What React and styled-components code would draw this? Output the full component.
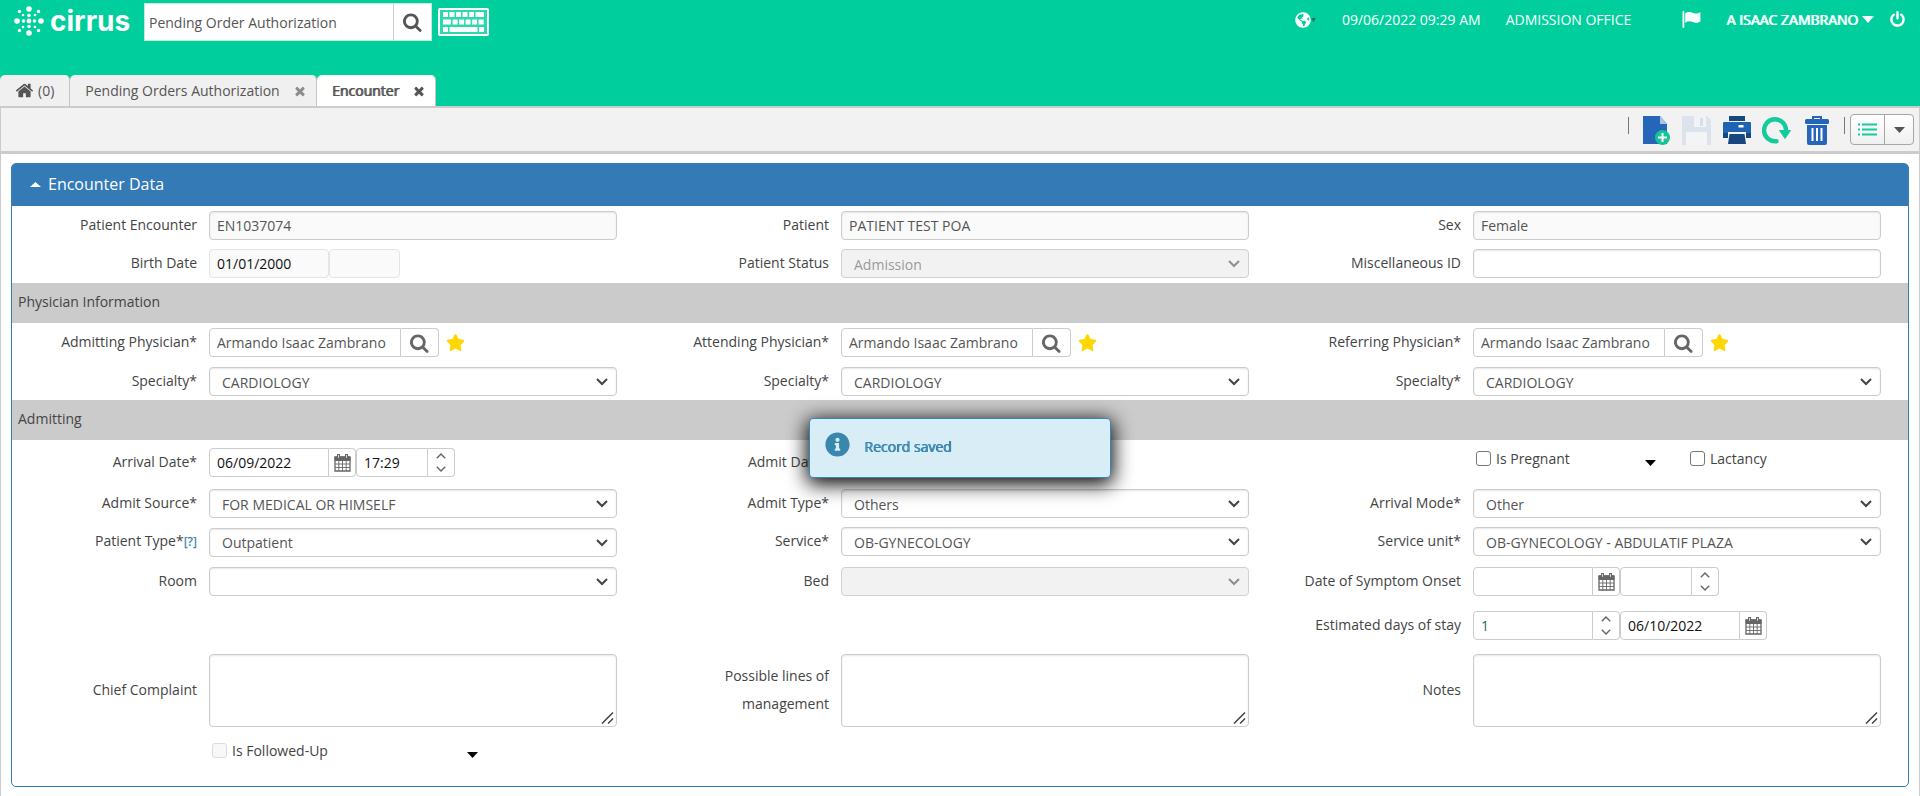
import React, { useState } from 'react'
import styled, { createGlobalStyle } from 'styled-components'
import { FaStar, FaInfoCircle, FaGlobeAmericas } from 'react-icons/fa'

const palette = {
  Green: '#00cf9d',
  Blue: '#337ab7',
  Text: '#444444',
  Input: '#555555',
  Border: '#cccccc',
  Band: '#cbcbcb',
  Info: '#3a87ad'
}

const GlobalStyle = createGlobalStyle`
  * {
    box-sizing: border-box;
  }

  body {
    margin: 0;
    background-color: #ffffff;
    color: ${palette.Text};
    font-family: 'Open Sans', 'Noto Sans', sans-serif;
    font-size: 14px;
    line-height: 20px;
  }

  button,
  input,
  select,
  textarea {
    margin: 0;
    color: inherit;
    font: inherit;
  }

  button {
    padding: 0;
    border: none;
    background: none;
    cursor: pointer;
  }

  svg {
    display: block;
    flex: none;
  }
`

const Page = styled.div`
  min-height: 100vh;
  display: flex;
  flex-direction: column;
`

/* ---------- header ---------- */

const Header = styled.header`
  display: flex;
  flex-direction: column;
  justify-content: space-between;
  height: 106px;
  background-color: ${palette.Green};
`

const TopBar = styled.div`
  display: flex;
  justify-content: space-between;
  padding: 3px 14px 0 14px;
`

const TopGroup = styled.div`
  display: flex;
  align-items: center;
  height: ${props => props.$height}px;
`

const Brand = styled.a`
  display: flex;
  align-items: center;
  gap: 6px;
  width: 130px;
  padding-bottom: 2px;
  color: #ffffff;
  text-decoration: none;
`

const BrandName = styled.span`
  font-family: Inter, sans-serif;
  font-size: 28px;
  font-weight: 700;
  line-height: 30px;
`

const SearchBox = styled.div`
  display: flex;
  width: 288px;
  height: 38px;
  margin-right: 6px;
  border: 1px solid #c5e8dd;
  background-color: #ffffff;
`

const SearchInput = styled.input`
  flex: 1;
  min-width: 0;
  padding: 1px 4px 0;
  border: none;
  border-right: 1px solid ${palette.Border};
  outline: none;
  background: none;
  color: ${palette.Input};
`

const SearchButton = styled.button`
  display: flex;
  align-items: center;
  justify-content: center;
  width: 37px;
  color: ${palette.Input};
`

const TopText = styled.span`
  margin-right: 25px;
  color: #ffffff;
`

const FlagButton = styled.button`
  margin: 0 25px 0 26px;
  color: #ffffff;
`

const LangButton = styled.button`
  display: flex;
  align-items: center;
  margin-right: 26px;
  color: #ffffff;
`

const UserButton = styled.button`
  display: flex;
  align-items: center;
  gap: 4px;
  margin-right: 15px;
  color: #ffffff;
  text-shadow: 1px 0 0 #ffffff;
`

const PowerButton = styled.button`
  color: #ffffff;
`

const Tabs = styled.nav`
  display: flex;
  align-items: flex-end;
`

const Tab = styled.div`
  display: flex;
  align-items: center;
  height: 31px;
  padding: 0 9px 0 15px;
  border-right: 1px solid #c6c6c6;
  border-radius: 5px 5px 0 0;
  background-color: ${props => (props.$active ? '#ffffff' : '#f0f0f0')};
  color: ${palette.Input};
  text-shadow: ${props => (props.$active ? '1px 0 0 #555555' : 'none')};
`

const TabButton = styled.button`
  display: flex;
  align-items: center;
  gap: 4px;
  padding-right: ${props => (props.$home ? 6 : 13)}px;
  text-shadow: inherit;
`

const TabClose = styled.button`
  color: ${props => (props.$active ? '#555555' : '#8c8c8c')};
`

/* ---------- toolbar ---------- */

const Toolbar = styled.div`
  display: flex;
  align-items: center;
  justify-content: flex-end;
  height: 48px;
  padding-right: 5px;
  border: 1px solid ${palette.Border};
  border-width: 2px 1px 3px;
  background-color: #f2f2f2;
`

const Divider = styled.span`
  align-self: flex-start;
  width: 1px;
  height: 17px;
  margin: 9px 5px 0 10px;
  background-color: #777777;
`

const Tools = styled.div`
  display: flex;
  gap: 11px;
  padding: 2px 3px 0 8px;
`

const ToolButton = styled.button`
  display: flex;
  justify-content: center;
  width: 29px;

  &:disabled {
    cursor: default;
  }
`

const ViewSwitch = styled.div`
  display: flex;
  height: 31px;
  border: 1px solid #a6a6a6;
  border-radius: 4px;
  background: linear-gradient(#ffffff, #f0f0f0);
`

const ViewButton = styled.button`
  display: flex;
  align-items: center;
  justify-content: center;
  width: ${props => (props.$wide ? 34 : 28)}px;
  border-right: ${props => (props.$wide ? '1px solid #a6a6a6' : 'none')};
`

/* ---------- panel ---------- */

const Main = styled.main`
  flex: 1;
  padding: 9px 10px 10px;
  border: 1px solid ${palette.Border};
  border-width: 0 1px;
`

const Panel = styled.section`
  border: 1px solid ${palette.Blue};
  border-radius: 5px;
`

const PanelHeader = styled.button`
  display: flex;
  align-items: center;
  gap: 7px;
  width: 100%;
  height: 42px;
  padding: 0 0 2px 18px;
  border-radius: 3px 3px 0 0;
  background-color: ${palette.Blue};
  color: #ffffff;
  font-size: 16px;
`

const SectionTitle = styled.h2`
  margin: 0;
  padding: 9px 6px 11px;
  background-color: ${palette.Band};
  font-size: 14px;
  font-weight: 400;
  line-height: 20px;
`

const Section = styled.div`
  padding: ${props => props.$padding};
`

const Row = styled.div`
  display: grid;
  grid-template-columns: repeat(3, minmax(0, 1fr));
  align-items: start;
  margin-top: ${props => props.$gap || 0}px;
`

const Cell = styled.div`
  display: grid;
  grid-template-columns: 185px minmax(0, 1fr);
  column-gap: 12px;
  align-items: center;
  padding-right: 27px;
`

const Label = styled.label`
  padding-bottom: 1px;
  line-height: 28px;
  text-align: right;
`

const Help = styled.a`
  color: ${palette.Info};
  font-size: 12px;
  font-weight: 600;
  text-decoration: none;
`

const Inline = styled.div`
  display: flex;
  align-items: center;
  height: ${props => props.$height || 29}px;
`

const Input = styled.input`
  width: 100%;
  height: 29px;
  padding: 0 7px;
  border: 1px solid ${palette.Border};
  border-radius: 4px;
  outline: none;
  background-color: ${props => (props.readOnly ? '#fafafa' : '#ffffff')};
  box-shadow: inset 0 1px 2px #e6e6e6;
  color: ${palette.Input};
`

const ShortInput = styled(Input)`
  width: ${props => props.$width}px;
  border-color: ${props => (props.readOnly ? '#e4e4e4' : palette.Border)};
  border-radius: ${props => (props.$joined ? '4px 0 0 4px' : '4px')};
  box-shadow: none;
  color: ${props => props.$color || '#111111'};
`

const AddOn = styled.button`
  display: flex;
  flex-direction: column;
  align-items: center;
  justify-content: center;
  gap: 7px;
  width: ${props => props.$width}px;
  height: 29px;
  margin-right: ${props => props.$after || 0}px;
  border: 1px solid ${palette.Border};
  border-left: none;
  border-radius: 0 4px 4px 0;
  background-color: #ffffff;
  color: #666666;
`

const FavButton = styled.button`
  color: #ffd700;
`

const SelectWrap = styled.div`
  position: relative;
  opacity: ${props => (props.$disabled ? 0.6 : 1)};
`

const Select = styled.select`
  display: block;
  width: 100%;
  height: 29px;
  padding: 2px 30px 0 12px;
  border: 1px solid ${palette.Border};
  border-radius: 4px;
  outline: none;
  appearance: none;
  background-color: #ffffff;
  box-shadow: inset 0 1px 2px #e6e6e6;
  color: ${palette.Input};

  &:disabled {
    background-color: #ebebeb;
    border-color: #b4b4b4;
    opacity: 1;
  }
`

const SelectArrow = styled.svg`
  position: absolute;
  top: 11px;
  right: 9px;
  pointer-events: none;
`

const AreaWrap = styled.div`
  position: relative;
  height: 73px;
`

const Area = styled.textarea`
  display: block;
  width: 100%;
  height: 73px;
  padding: 4px 7px;
  border: 1px solid ${palette.Border};
  border-radius: 4px;
  outline: none;
  resize: none;
  box-shadow: inset 0 1px 2px #e6e6e6;
`

const Grip = styled.svg`
  position: absolute;
  right: 3px;
  bottom: 3px;
  pointer-events: none;
`

const CheckLabel = styled.label`
  display: flex;
  align-items: center;
  gap: 5px;
  width: ${props => props.$width}px;
  padding-left: 3px;
`

const Check = styled.input`
  appearance: none;
  width: 15px;
  height: 15px;
  border: 1px solid ${props => (props.disabled ? '#dddddd' : '#767676')};
  border-radius: 3px;
  background-color: ${props => (props.disabled ? '#f8f8f8' : '#ffffff')};

  &:checked {
    background-color: ${palette.Blue};
  }
`

const CaretButton = styled.button`
  padding-top: 8px;
  width: ${props => props.$width}px;
`

const Toast = styled.div`
  position: fixed;
  top: 418px;
  left: 50%;
  display: flex;
  align-items: center;
  gap: 14px;
  width: 302px;
  height: 60px;
  margin-left: -151px;
  padding: 0 15px 8px;
  border: 1px solid ${palette.Info};
  border-radius: 4px;
  background-color: #d9edf7;
  box-shadow: 0 4px 20px 2px #000000;
  color: ${palette.Info};
`

const ToastText = styled.span`
  padding-top: 5px;
  text-shadow: 1px 0 0 ${palette.Info};
`

/* ---------- icons ---------- */

const Glyph = ({ size, d }) => (
  <svg width={size} height={size} viewBox='0 0 1792 1792' fill='currentColor'>
    <path d={d} />
  </svg>
)

const glyphs = {
  search:
    'M1152 832q0-185-131.5-316.5t-316.5-131.5-316.5 131.5-131.5 316.5 131.5 316.5 316.5 131.5 316.5-131.5 131.5-316.5zm512 832q0 52-38 90t-90 38q-54 0-90-38l-343-342q-179 124-399 124-143 0-273.5-55.5t-225-150-150-225-55.5-273.5 55.5-273.5 150-225 225-150 273.5-55.5 273.5 55.5 225 150 150 225 55.5 273.5q0 220-124 399l343 343q37 37 37 90z',
  home:
    'M1472 992v480q0 26-19 45t-45 19h-384v-384h-256v384h-384q-26 0-45-19t-19-45v-480q0-1 .5-3t.5-3l575-474 575 474q1 2 1 6zm223-69l-62 74q-8 9-21 11h-3q-13 0-21-7l-692-577-692 577q-12 8-24 7-13-2-21-11l-62-74q-8-10-7-23.5t11-21.5l719-599q32-26 76-26t76 26l244 204v-195q0-14 9-23t23-9h192q14 0 23 9t9 23v408l219 182q10 8 11 21.5t-7 23.5z',
  times:
    'M1490 1322q0 40-28 68l-136 136q-28 28-68 28t-68-28l-294-294-294 294q-28 28-68 28t-68-28l-136-136q-28-28-28-68t28-68l294-294-294-294q-28-28-28-68t28-68l136-136q28-28 68-28t68 28l294 294 294-294q28-28 68-28t68 28l136 136q28 28 28 68t-28 68l-294 294 294 294q28 28 28 68z',
  power:
    'M1664 896q0 156-61 298t-164 245-245 164-298 61-298-61-245-164-164-245-61-298q0-182 80.5-343t226.5-270q43-32 95.5-25t83.5 50q32 42 24.5 94.5t-49.5 84.5q-98 74-151.5 181t-53.5 228q0 104 40.5 198.5t109.5 163.5 163.5 109.5 198.5 40.5 198.5-40.5 163.5-109.5 109.5-163.5 40.5-198.5q0-121-53.5-228t-151.5-181q-42-32-49.5-84.5t24.5-94.5q31-43 84-50t95 25q146 109 226.5 270t80.5 343zm-640-768v640q0 52-38 90t-90 38-90-38-38-90v-640q0-52 38-90t90-38 90 38 38 90z'
}

const dots = [
  [15, 3, 2.8], [15, 27, 2.8], [3, 15, 2.8], [27, 15, 2.8],
  [15, 9.5, 1.8], [15, 20.5, 1.8], [9.5, 15, 1.8], [20.5, 15, 1.8],
  [15, 15, 2.4], [5.5, 5.5, 1.7], [24.5, 5.5, 1.7], [5.5, 24.5, 1.7],
  [24.5, 24.5, 1.7], [9, 9, 1.3], [21, 9, 1.3], [9, 21, 1.3], [21, 21, 1.3]
]

const LogoIcon = () => (
  <svg width='30' height='30' viewBox='0 0 30 30' fill='#ffffff'>
    {dots.map(([x, y, r]) => (
      <circle key={`${x}-${y}`} cx={x} cy={y} r={r} />
    ))}
  </svg>
)

const KeyboardIcon = () => (
  <svg width='51' height='28' viewBox='0 0 51 28' fill='#ffffff'>
    <rect x='1' y='1' width='49' height='26' rx='1' fill='#2dd8ae' stroke='#ffffff' strokeWidth='2' />
    {[0, 1, 2, 3, 4, 5].map(i => (
      <rect key={i} x={5 + i * 6.5} y='4' width={i === 5 ? 8.5 : 5} height='5' />
    ))}
    <rect x='5' y='11.5' width='8' height='5' />
    {[0, 1, 2, 3, 4].map(i => (
      <rect key={i} x={14.6 + i * 6.5} y='11.5' width='5' height='5' />
    ))}
    <rect x='5' y='19' width='5' height='5' />
    <rect x='11.5' y='19' width='28' height='5' />
    <rect x='41' y='19' width='5' height='5' />
  </svg>
)

const FlagIcon = () => (
  <svg width='19' height='17' viewBox='0 0 19 17' fill='#ffffff'>
    <rect x='0.5' y='0' width='1.8' height='17' rx='0.8' />
    <path d='M3.2 2.2C6 .6 8.3.6 11 1.9c2.6 1.2 4.5.8 7.4-.7v9.3c-2.8 1.6-5 1.9-7.5.6-2.6-1.3-4.9-1-7.700.6z' />
  </svg>
)

const Triangle = ({ width = 11, height = 6, up, color = '#000000' }) => (
  <svg width={width} height={height} viewBox='0 0 12 6' preserveAspectRatio='none' fill={color}>
    <path d={up ? 'M0 6L6 0l6 6z' : 'M0 0h12L6 6z'} />
  </svg>
)

const CalendarIcon = () => (
  <svg width='17' height='18' viewBox='0 0 17 18' fill='none' stroke='#666666'>
    <path d='M1 3h15v14H1z' strokeWidth='1.3' />
    <path d='M1 3h15v3.5H1z' fill='#666666' />
    <path d='M4.5.8v3.4M12.5.8v3.4' strokeWidth='3' strokeLinecap='round' />
    <path d='M4.5 1v2.8M12.5 1v2.8' stroke='#dddddd' strokeWidth='1' />
    <path d='M1 10h15M1 13.5h15M4.8 6v11M8.5 6v11M12.2 6v11' strokeWidth='0.9' />
  </svg>
)

const ChevronIcon = ({ up }) => (
  <svg width='10' height='6' viewBox='0 0 10 6' fill='none' stroke='#666666' strokeWidth='1.4'>
    <path d={up ? 'M.8 5.2L5 1l4.2 4.2' : 'M.8.8L5 5 9.2.8'} />
  </svg>
)

const NewIcon = () => (
  <svg width='29' height='29' viewBox='0 0 29 29'>
    <path d='M1 0h17l7 8v20H1z' fill='#2566ba' />
    <path d='M18 0l7 8h-7z' fill='#a9c4e6' />
    <circle cx='20.5' cy='21.5' r='7.5' fill='#16c595' />
    <path d='M20.5 17v9M16 21.5h9' stroke='#ffffff' strokeWidth='2' />
  </svg>
)

const SaveIcon = () => (
  <svg width='29' height='29' viewBox='0 0 29 29'>
    <path d='M0 0h25l4 4v25H0z' fill='#dde3ec' />
    <rect x='12' y='0' width='12' height='11' fill='#f1f3f6' />
    <rect x='18' y='2' width='3' height='8' fill='#d9dee6' />
    <rect x='4' y='16' width='21' height='13' fill='#f3f4f6' />
  </svg>
)

const PrintIcon = () => (
  <svg width='28' height='28' viewBox='0 0 28 28'>
    <path d='M6 0h16v5H6zM0 17h28v5H0z' fill='#17477f' />
    <rect x='0' y='6' width='28' height='13' rx='1' fill='#2063b3' />
    <path d='M0 17h28v4.5H0z' fill='#17477f' />
    <rect x='15.5' y='9' width='5' height='2.5' fill='#ffffff' />
    <path d='M5 16h18v13H5z' fill='#f2f2f2' />
    <path d='M6.5 18h15l1.5 10H5z' fill='#17477f' />
  </svg>
)

const RefreshIcon = () => (
  <svg width='29' height='29' viewBox='0 0 29 29' fill='none'>
    <path d='M14.5 25.2A11 11 0 1 1 24 15' stroke='#14cb9b' strokeWidth='4.4' strokeLinecap='round' />
    <path d='M17.5 14.5h11L23 22.5z' fill='#14cb9b' stroke='#14cb9b' strokeLinejoin='round' />
  </svg>
)

const TrashIcon = () => (
  <svg width='24' height='29' viewBox='0 0 24 29'>
    <path d='M8 3V1h8v2' fill='none' stroke='#2566ba' strokeWidth='2' />
    <rect x='0' y='3' width='24' height='5' rx='1.5' fill='#2566ba' />
    <path d='M2 9h20v18q0 2-2 2H4q-2 0-2-2z' fill='#2566ba' />
    <path d='M7.5 12v13M12 12v13M16.5 12v13' stroke='#ffffff' strokeWidth='2' />
  </svg>
)

const ListIcon = () => (
  <svg width='19' height='13' viewBox='0 0 19 13' stroke='#14cb9b' strokeWidth='2'>
    <path d='M0 1.5h2M0 6.5h2M0 11.5h2M4 1.5h15M4 6.5h15M4 11.5h15' />
  </svg>
)

/* ---------- fields ---------- */

const Field = ({ id, label, help, children }) => (
  <Cell>
    <Label htmlFor={id}>
      {label}
      {help && <Help href='#help'>[?]</Help>}
    </Label>
    {children}
  </Cell>
)

const TextField = ({ id, label, value = '', readOnly }) => (
  <Field id={id} label={label}>
    <Input id={id} defaultValue={value} readOnly={readOnly} />
  </Field>
)

const SelectField = ({ id, label, value = '', disabled, help }) => (
  <Field id={id} label={label} help={help}>
    <SelectWrap $disabled={disabled}>
      <Select id={id} disabled={disabled} defaultValue={value}>
        <option value={value}>{value}</option>
      </Select>
      <SelectArrow width='12' height='8' viewBox='0 0 12 8' fill='none' stroke='#444444' strokeWidth='2'>
        <path d='M1 1l5 5 5-5' />
      </SelectArrow>
    </SelectWrap>
  </Field>
)

const PhysicianField = ({ id, label }) => (
  <Field id={id} label={label}>
    <Inline>
      <ShortInput
        id={id}
        $width={192}
        $joined
        $color={palette.Input}
        defaultValue='Armando Isaac Zambrano'
      />
      <AddOn $width={38} $after={7} aria-label={`Search ${label}`}>
        <Glyph size={20} d={glyphs.search} />
      </AddOn>
      <FavButton aria-label='Favorite'>
        <FaStar size={19} />
      </FavButton>
    </Inline>
  </Field>
)

const AreaField = ({ id, label }) => (
  <Field id={id} label={label}>
    <AreaWrap>
      <Area id={id} />
      <Grip width='13' height='12' viewBox='0 0 13 12' stroke='#444444' strokeWidth='1.5'>
        <path d='M1 11.5L12 .5M7 11.5l5-5' />
      </Grip>
    </AreaWrap>
  </Field>
)

const Spinner = ({ label }) => (
  <AddOn $width={27} aria-label={label}>
    <ChevronIcon up />
    <ChevronIcon />
  </AddOn>
)

const DateAddOn = () => (
  <AddOn $width={27} aria-label='Pick a date'>
    <CalendarIcon />
  </AddOn>
)

const DateTimeField = ({ id, label, date, time }) => (
  <Field id={id} label={label}>
    <Inline>
      <ShortInput id={id} $width={120} $joined defaultValue={date} />
      <DateAddOn />
      <ShortInput $width={72} $joined defaultValue={time} aria-label={`${label} time`} />
      <Spinner label='Change time' />
    </Inline>
  </Field>
)

const App = () => {
  const [open, setOpen] = useState(true)

  return (
    <Page>
      <GlobalStyle />
      <Header>
        <TopBar>
          <TopGroup $height={38}>
            <Brand href='#home'>
              <LogoIcon />
              <BrandName>cirrus</BrandName>
            </Brand>
            <SearchBox>
              <SearchInput aria-label='Search' defaultValue='Pending Order Authorization' />
              <SearchButton aria-label='Search'>
                <Glyph size={20} d={glyphs.search} />
              </SearchButton>
            </SearchBox>
            <KeyboardIcon />
          </TopGroup>
          <TopGroup $height={33}>
            <LangButton aria-label='Language'>
              <FaGlobeAmericas size={16} />
              <Triangle width={5} height={4} color='#1f6f5c' />
            </LangButton>
            <TopText>09/06/2022 09:29 AM</TopText>
            <TopText>ADMISSION OFFICE</TopText>
            <FlagButton aria-label='Flag'>
              <FlagIcon />
            </FlagButton>
            <UserButton>
              A ISAAC ZAMBRANO
              <Triangle width={12} height={7} color='#ffffff' />
            </UserButton>
            <PowerButton aria-label='Log out'>
              <Glyph size={17} d={glyphs.power} />
            </PowerButton>
          </TopGroup>
        </TopBar>
        <Tabs>
          <Tab>
            <TabButton $home>
              <Glyph size={19} d={glyphs.home} />
              (0)
            </TabButton>
          </Tab>
          <Tab>
            <TabButton>Pending Orders Authorization</TabButton>
            <TabClose aria-label='Close Pending Orders Authorization'>
              <Glyph size={14} d={glyphs.times} />
            </TabClose>
          </Tab>
          <Tab $active>
            <TabButton>Encounter</TabButton>
            <TabClose $active aria-label='Close Encounter'>
              <Glyph size={14} d={glyphs.times} />
            </TabClose>
          </Tab>
        </Tabs>
      </Header>

      <Toolbar>
        <Divider />
        <Tools>
          <ToolButton aria-label='New'><NewIcon /></ToolButton>
          <ToolButton aria-label='Save' disabled><SaveIcon /></ToolButton>
          <ToolButton aria-label='Print'><PrintIcon /></ToolButton>
          <ToolButton aria-label='Refresh'><RefreshIcon /></ToolButton>
          <ToolButton aria-label='Delete'><TrashIcon /></ToolButton>
        </Tools>
        <Divider />
        <ViewSwitch>
          <ViewButton $wide aria-label='List view'><ListIcon /></ViewButton>
          <ViewButton aria-label='More views'><Triangle color='#555555' /></ViewButton>
        </ViewSwitch>
      </Toolbar>

      <Main>
        <Panel>
          <PanelHeader aria-expanded={open} onClick={() => setOpen(!open)}>
            <Triangle up={open} height={5} color='#ffffff' />
            Encounter Data
          </PanelHeader>
          {open && (
            <>
              <Section $padding='5px 0'>
                <Row>
                  <TextField id='encounter' label='Patient Encounter' value='EN1037074' readOnly />
                  <TextField id='patient' label='Patient' value='PATIENT TEST POA' readOnly />
                  <TextField id='sex' label='Sex' value='Female' readOnly />
                </Row>
                <Row $gap={9}>
                  <Field id='birth' label='Birth Date'>
                    <Inline>
                      <ShortInput id='birth' $width={120} defaultValue='01/01/2000' readOnly />
                      <ShortInput $width={71} aria-label='Birth time' readOnly />
                    </Inline>
                  </Field>
                  <SelectField id='status' label='Patient Status' value='Admission' disabled />
                  <TextField id='misc' label='Miscellaneous ID' />
                </Row>
              </Section>

              <SectionTitle>Physician Information</SectionTitle>
              <Section $padding='5px 0 4px'>
                <Row>
                  <PhysicianField id='admitting' label='Admitting Physician*' />
                  <PhysicianField id='attending' label='Attending Physician*' />
                  <PhysicianField id='referring' label='Referring Physician*' />
                </Row>
                <Row $gap={10}>
                  <SelectField id='specialty1' label='Specialty*' value='CARDIOLOGY' />
                  <SelectField id='specialty2' label='Specialty*' value='CARDIOLOGY' />
                  <SelectField id='specialty3' label='Specialty*' value='CARDIOLOGY' />
                </Row>
              </Section>

              <SectionTitle>Admitting</SectionTitle>
              <Section $padding='8px 0 21px'>
                <Row>
                  <DateTimeField id='arrival' label='Arrival Date*' date='06/09/2022' time='17:29' />
                  <DateTimeField id='admit' label='Admit Date*' date='' time='' />
                  <Cell>
                    <span />
                    <Inline $height={21}>
                      <CheckLabel $width={172}>
                        <Check type='checkbox' />
                        Is Pregnant
                      </CheckLabel>
                      <CaretButton $width={42} aria-label='Pregnancy details'>
                        <Triangle />
                      </CaretButton>
                      <CheckLabel>
                        <Check type='checkbox' />
                        Lactancy
                      </CheckLabel>
                    </Inline>
                  </Cell>
                </Row>
                <Row $gap={12}>
                  <SelectField id='source' label='Admit Source*' value='FOR MEDICAL OR HIMSELF' />
                  <SelectField id='type' label='Admit Type*' value='Others' />
                  <SelectField id='mode' label='Arrival Mode*' value='Other' />
                </Row>
                <Row $gap={9}>
                  <SelectField id='ptype' label='Patient Type*' value='Outpatient' help />
                  <SelectField id='service' label='Service*' value='OB-GYNECOLOGY' />
                  <SelectField id='unit' label='Service unit*' value='OB-GYNECOLOGY - ABDULATIF PLAZA' />
                </Row>
                <Row $gap={10}>
                  <SelectField id='room' label='Room' />
                  <SelectField id='bed' label='Bed' disabled />
                  <DateTimeField id='onset' label='Date of Symptom Onset' date='' time='' />
                </Row>
                <Row $gap={15}>
                  <span />
                  <span />
                  <Field id='days' label='Estimated days of stay'>
                    <Inline>
                      <ShortInput id='days' $width={120} $joined $color='#1d6b5e' defaultValue='1' />
                      <Spinner label='Change days' />
                      <ShortInput
                        $width={120}
                        $joined
                        defaultValue='06/10/2022'
                        aria-label='Estimated discharge date'
                      />
                      <DateAddOn />
                    </Inline>
                  </Field>
                </Row>
                <Row $gap={14}>
                  <AreaField id='complaint' label='Chief Complaint' />
                  <AreaField
                    id='management'
                    label={<>Possible lines of<br />management</>}
                  />
                  <AreaField id='notes' label='Notes' />
                </Row>
                <Row $gap={9}>
                  <Cell>
                    <span />
                    <Inline>
                      <CheckLabel $width={258}>
                        <Check type='checkbox' disabled />
                        Is Followed-Up
                      </CheckLabel>
                      <CaretButton $width={11} aria-label='Follow-up details'>
                        <Triangle />
                      </CaretButton>
                    </Inline>
                  </Cell>
                </Row>
              </Section>
            </>
          )}
        </Panel>
      </Main>

      <Toast role='status'>
        <FaInfoCircle size={25} />
        <ToastText>Record saved</ToastText>
      </Toast>
    </Page>
  )
}

export default App
